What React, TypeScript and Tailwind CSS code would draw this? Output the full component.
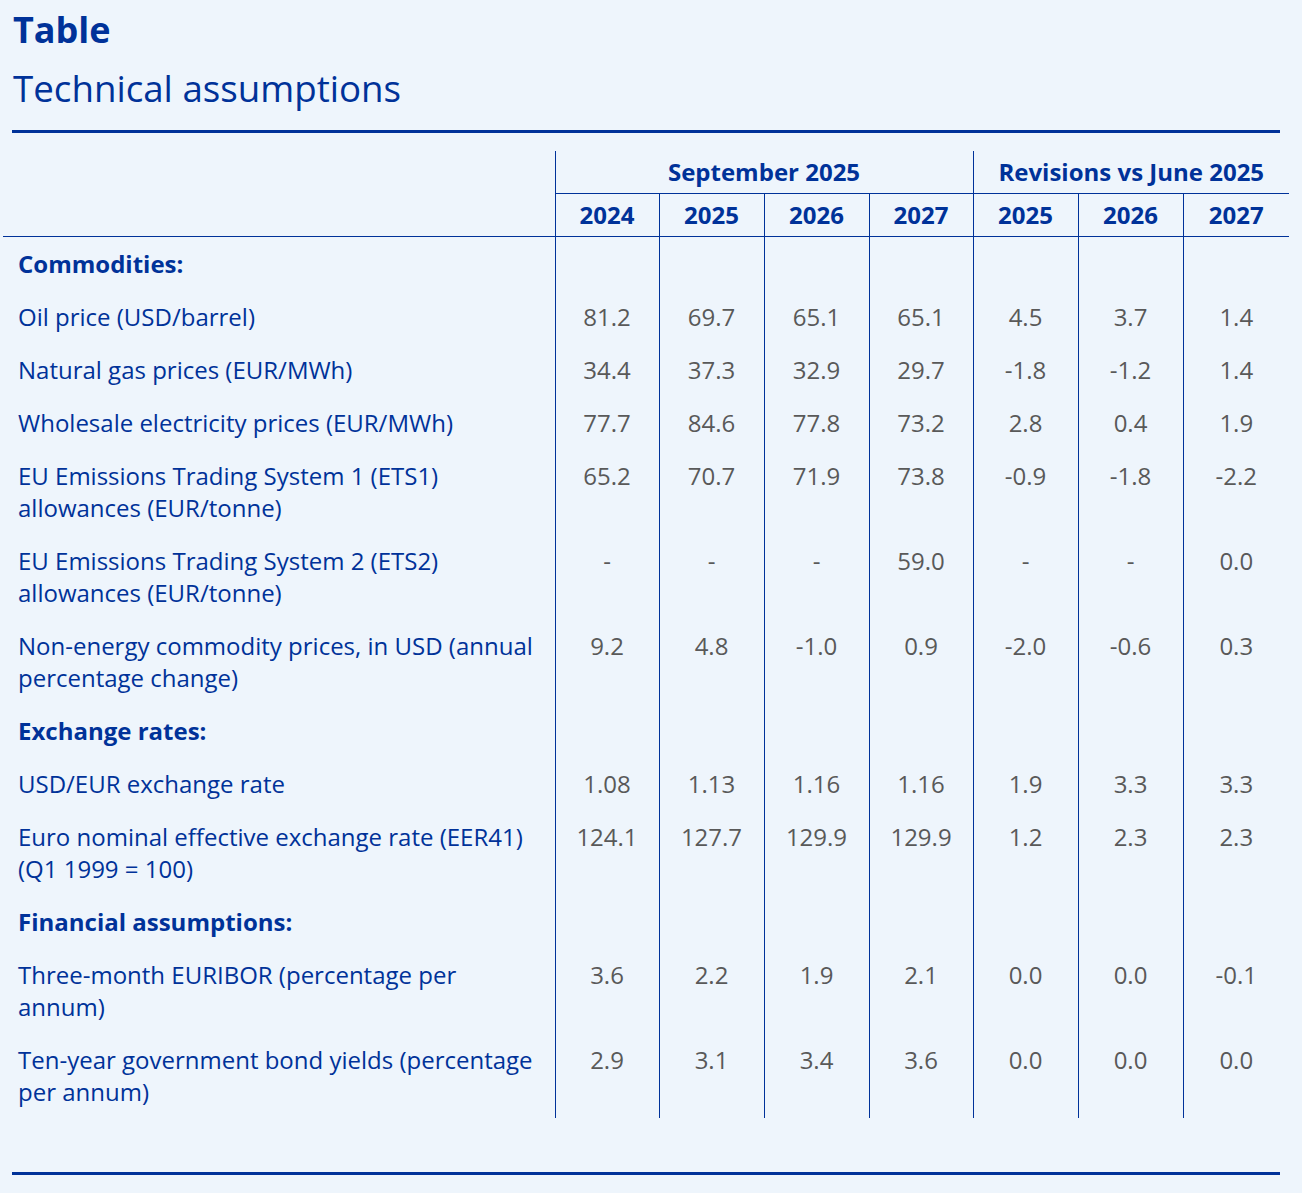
import React from "react";

type Row =
  | { kind: "section"; label: string }
  | { kind: "data"; label: string; values: string[] };

const rows: Row[] = [
  { kind: "section", label: "Commodities:" },
  { kind: "data", label: "Oil price (USD/barrel)", values: ["81.2", "69.7", "65.1", "65.1", "4.5", "3.7", "1.4"] },
  { kind: "data", label: "Natural gas prices (EUR/MWh)", values: ["34.4", "37.3", "32.9", "29.7", "-1.8", "-1.2", "1.4"] },
  { kind: "data", label: "Wholesale electricity prices (EUR/MWh)", values: ["77.7", "84.6", "77.8", "73.2", "2.8", "0.4", "1.9"] },
  { kind: "data", label: "EU Emissions Trading System 1 (ETS1) allowances (EUR/tonne)", values: ["65.2", "70.7", "71.9", "73.8", "-0.9", "-1.8", "-2.2"] },
  { kind: "data", label: "EU Emissions Trading System 2 (ETS2) allowances (EUR/tonne)", values: ["-", "-", "-", "59.0", "-", "-", "0.0"] },
  { kind: "data", label: "Non-energy commodity prices, in USD (annual percentage change)", values: ["9.2", "4.8", "-1.0", "0.9", "-2.0", "-0.6", "0.3"] },
  { kind: "section", label: "Exchange rates:" },
  { kind: "data", label: "USD/EUR exchange rate", values: ["1.08", "1.13", "1.16", "1.16", "1.9", "3.3", "3.3"] },
  { kind: "data", label: "Euro nominal effective exchange rate (EER41) (Q1 1999 = 100)", values: ["124.1", "127.7", "129.9", "129.9", "1.2", "2.3", "2.3"] },
  { kind: "section", label: "Financial assumptions:" },
  { kind: "data", label: "Three-month EURIBOR (percentage per annum)", values: ["3.6", "2.2", "1.9", "2.1", "0.0", "0.0", "-0.1"] },
  { kind: "data", label: "Ten-year government bond yields (percentage per annum)", values: ["2.9", "3.1", "3.4", "3.6", "0.0", "0.0", "0.0"] },
];

const years = ["2024", "2025", "2026", "2027", "2025", "2026", "2027"];

export default function App() {
  return (
    <div
      className="min-h-[1193px] w-full bg-[#eef5fc] text-[#003299]"
      style={{ fontFamily: '"Open Sans", "Noto Sans", sans-serif' }}
    >
      <div className="pl-[13px] pt-[8px]">
        <h1 className="text-[36px] font-bold leading-[44px]">Table</h1>
        <h2 className="mt-[8px] text-[36.7px] font-normal leading-[56px]">Technical assumptions</h2>
      </div>
      <div className="ml-[12px] mr-[22px] mt-[14px] h-[3px] bg-[#003299]" />
      <div className="pl-[3px] pr-[13px] pt-[18px]">
        <table className="w-full table-fixed border-collapse">
          <colgroup>
            <col className="w-[552px]" />
            <col className="w-[104px]" />
            <col className="w-[105px]" />
            <col className="w-[105px]" />
            <col className="w-[104px]" />
            <col className="w-[105px]" />
            <col className="w-[105px]" />
            <col />
          </colgroup>
          <thead>
            <tr className="h-[42px]">
              <th rowSpan={2} className="border-b border-[#003299] p-0" />
              <th
                colSpan={4}
                className="border-l border-b border-[#003299] p-0 text-center align-middle text-[24px] font-bold leading-[30px]"
              >
                September 2025
              </th>
              <th
                colSpan={3}
                className="border-l border-b border-[#003299] p-0 text-center align-middle text-[24px] font-bold leading-[30px]"
              >
                Revisions vs June 2025
              </th>
            </tr>
            <tr className="h-[43px]">
              {years.map((y, i) => (
                <th
                  key={i}
                  className="border-l border-b border-[#003299] p-0 text-center align-middle text-[24px] font-bold leading-[30px]"
                >
                  {y}
                </th>
              ))}
            </tr>
          </thead>
          <tbody>
            {rows.map((r, ri) => (
              <tr key={ri}>
                <td
                  className={`pl-[15px] pr-[12px] pt-[11px] pb-[10px] align-top text-[24px] leading-[32px] ${
                    r.kind === "section" ? "font-bold" : "font-normal"
                  }`}
                >
                  {r.label}
                </td>
                {(r.kind === "data" ? r.values : ["", "", "", "", "", "", ""]).map((v, vi) => (
                  <td
                    key={vi}
                    className="border-l border-[#003299] px-0 pt-[11px] pb-[10px] text-center align-top text-[24px] leading-[32px] text-[#595959]"
                  >
                    {v}
                  </td>
                ))}
              </tr>
            ))}
          </tbody>
        </table>
      </div>
      <div className="ml-[12px] mr-[22px] mt-[54px] h-[3px] bg-[#003299]" />
    </div>
  );
}
